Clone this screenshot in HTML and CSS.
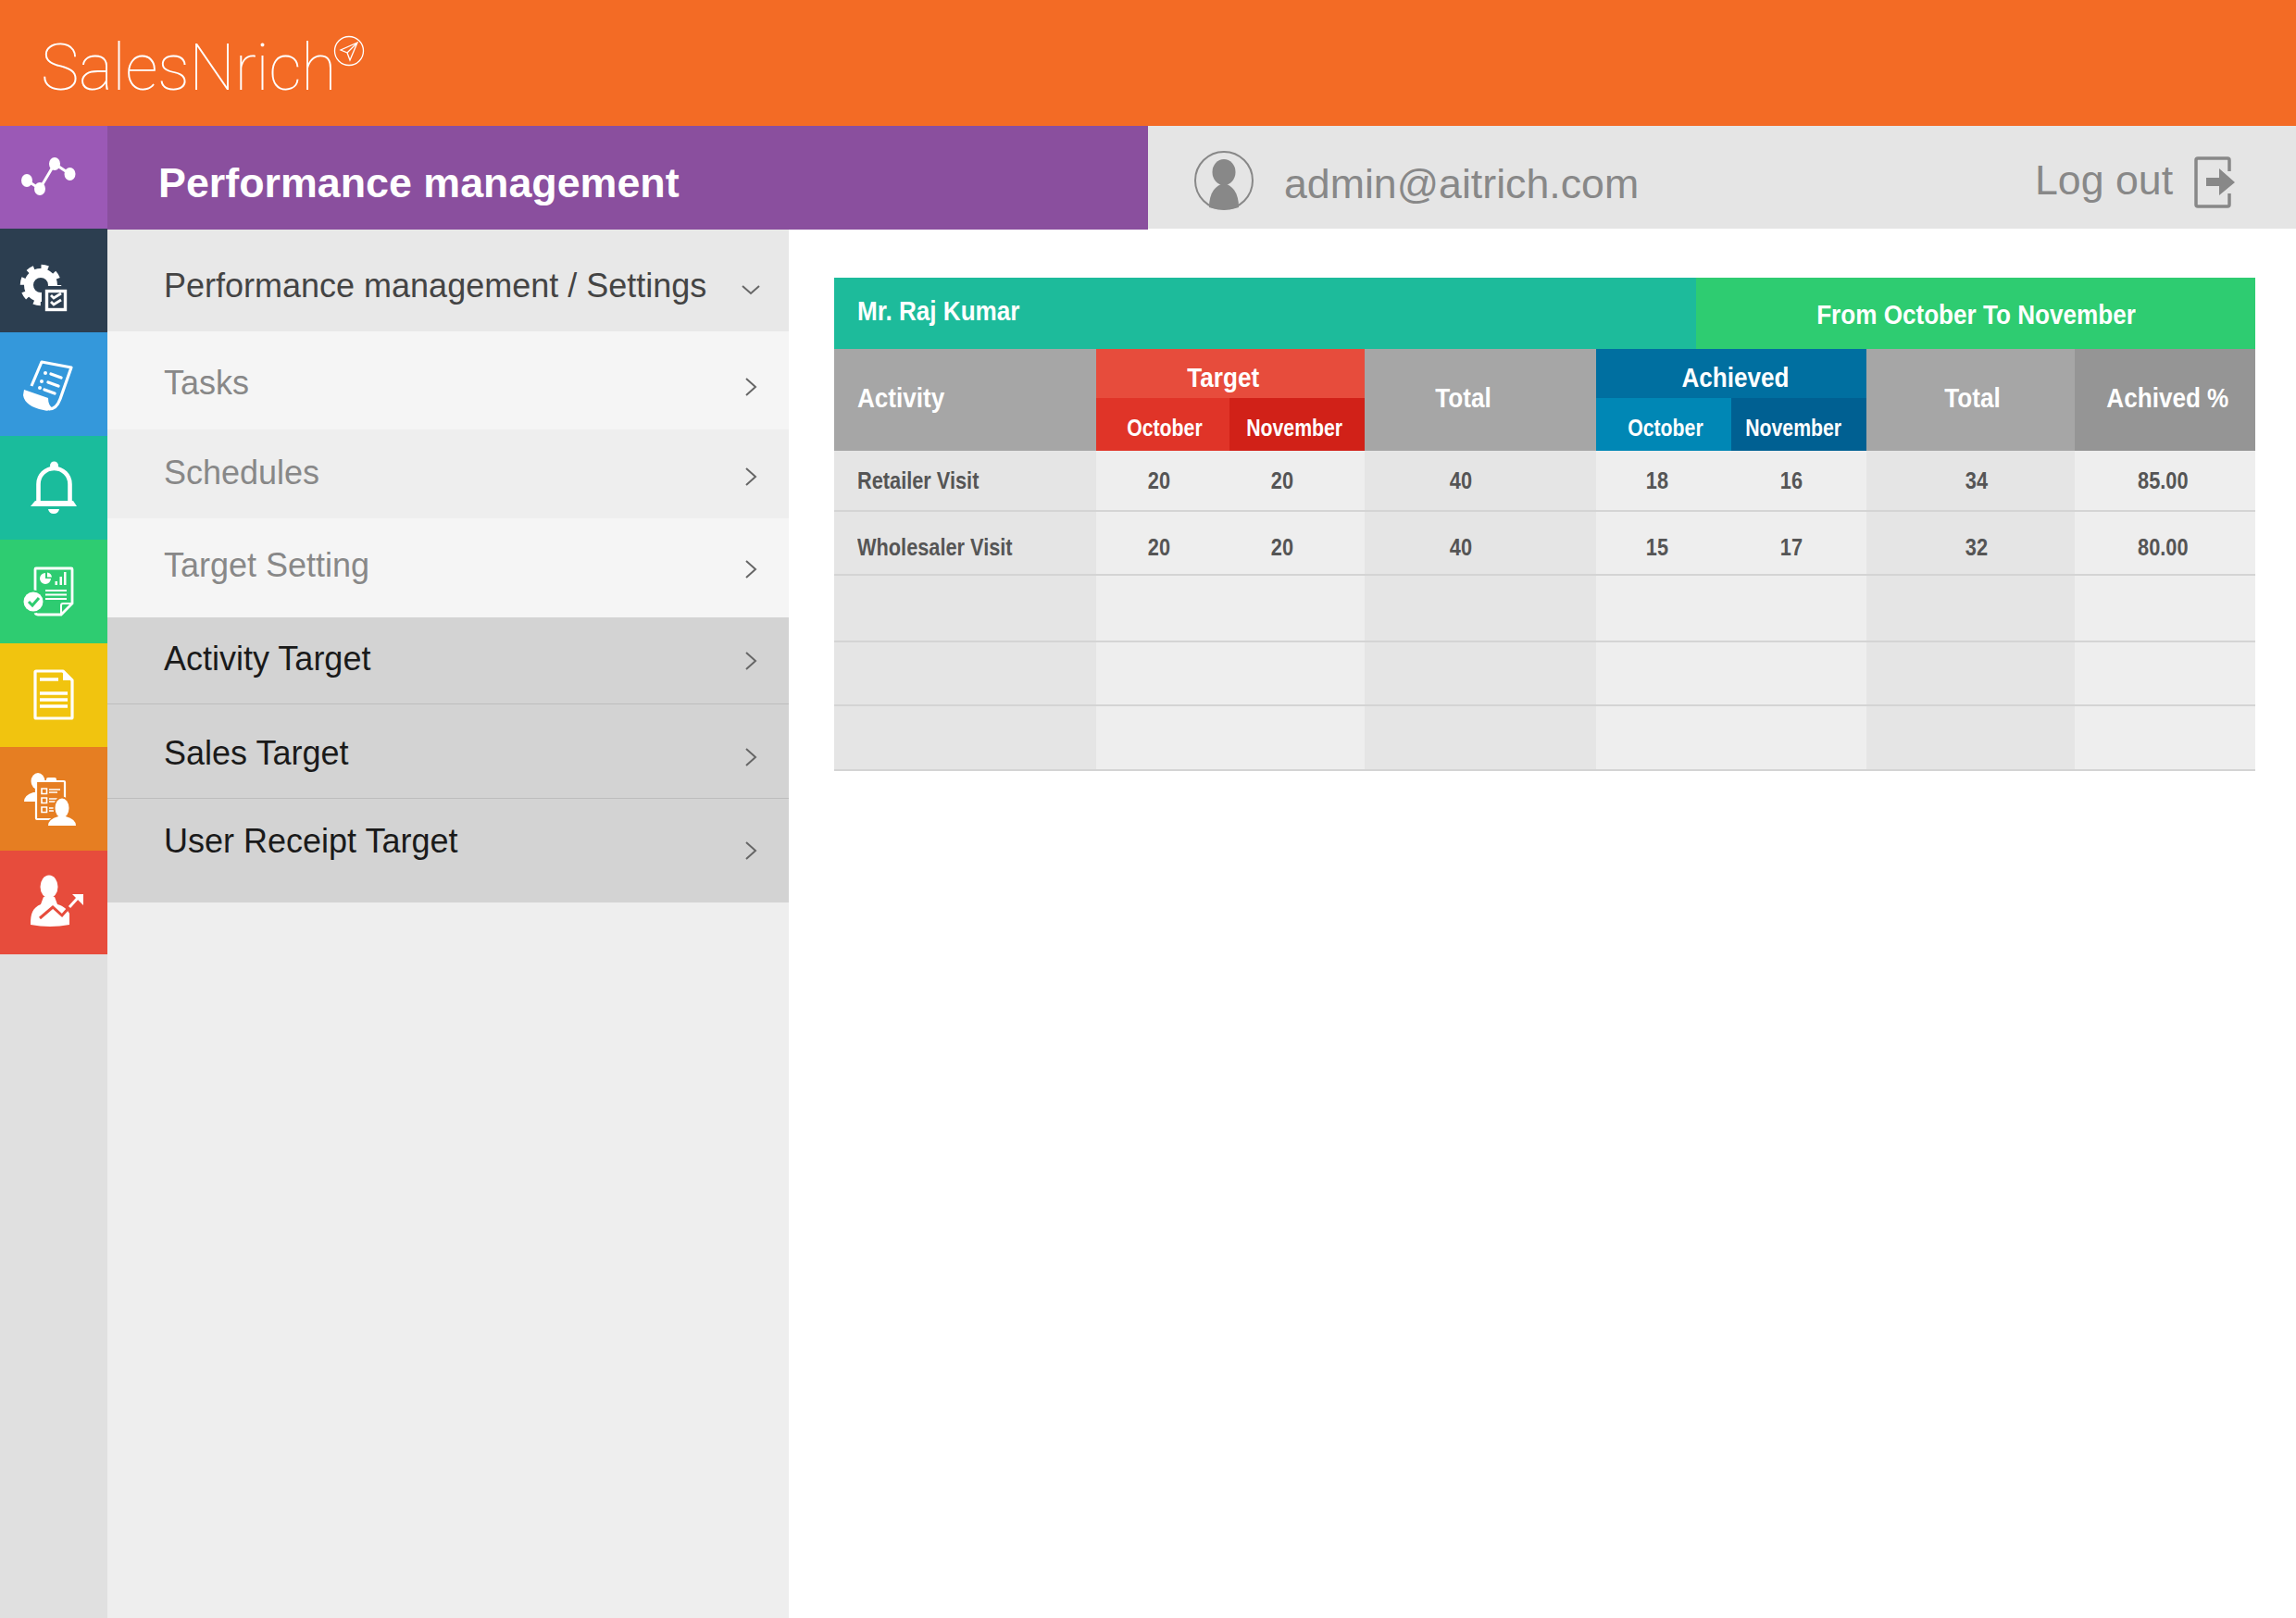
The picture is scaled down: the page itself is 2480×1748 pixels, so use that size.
FILE: index.html
```html
<!DOCTYPE html>
<html lang="en">
<head>
  <meta charset="UTF-8" />
  <title>SalesNrich - Performance management</title>
  <link rel="stylesheet" href="styles.css">
</head>
<body>

  <header class="topbar">
    <span class="logo">SalesNrich</span>
    <svg class="logo-badge" viewBox="0 0 36 36" fill="none" stroke="#fff" stroke-width="1.3">
      <circle cx="18" cy="18" r="15.5"/>
      <path d="M27 9 L9 17 L16 20 L19 28 Z M27 9 L16 20"/>
    </svg>
  </header>

  <div class="subbar">
    <div class="subbar-icon">
      <svg class="tile-icon" viewBox="0 0 116 111" fill="#fff" stroke="#fff">
        <path d="M29 59 L43 68 L59 41 L75.5 52" fill="none" stroke-width="3"/>
        <ellipse cx="29" cy="59" rx="6" ry="7" stroke="none"/>
        <ellipse cx="43" cy="68" rx="6" ry="7" stroke="none"/>
        <ellipse cx="59" cy="41" rx="6" ry="7" stroke="none"/>
        <ellipse cx="75.5" cy="52" rx="6" ry="7" stroke="none"/>
      </svg>
    </div>
    <h1 class="subbar-title">Performance management</h1>
    <div class="userbar">
      <svg class="user-icon" viewBox="0 0 66 66" fill="#888">
        <circle cx="33" cy="33" r="31" fill="none" stroke="#888" stroke-width="2"/>
        <ellipse cx="33" cy="24" rx="12.5" ry="14"/>
        <path d="M17 62 C17 46 24 38 33 36 C42 38 49 46 49 62 C40 65 26 65 17 62 Z"/>
      </svg>
      <span class="user-mail">admin@aitrich.com</span>
      <span class="logout">Log out</span>
      <svg class="logout-icon" viewBox="0 0 46 56" fill="#888">
        <path d="M38 16 V4 Q38 2 36 2 H4 Q2 2 2 4 V52 Q2 54 4 54 H36 Q38 54 38 52 V40" fill="none" stroke="#888" stroke-width="3.5"/>
        <path d="M13 23 H27 V13 L44 28 L27 42 V32 H13 Z"/>
      </svg>
    </div>
  </div>

  <div class="main">
    <nav class="rail">
      <div class="tile tile-dark">
        <svg class="tile-icon" viewBox="0 0 116 112" fill="#fff">
          <circle cx="44" cy="61" r="13" fill="none" stroke="#fff" stroke-width="10"/>
          <circle cx="44" cy="61" r="19.5" fill="none" stroke="#fff" stroke-width="5.500" stroke-dasharray="7.500 7.800"/>
          <rect x="45" y="62" width="31" height="31" fill="#2c3e50"/>
          <rect x="50.500" y="67.500" width="20" height="20" fill="none" stroke="#fff" stroke-width="3.400"/>
          <path d="M55 72 L58 75 L66 70 M55 79 L58 82 L66 77" fill="none" stroke="#fff" stroke-width="2.800"/>
        </svg>
      </div>
      <div class="tile tile-blue">
        <svg class="tile-icon" viewBox="0 0 116 112" fill="#fff">
          <path d="M34 58 L45 32 L77 38 L65 72 Q61 83 53 83" fill="none" stroke="#fff" stroke-width="3.200" stroke-linejoin="round"/>
          <path d="M26 62 L52 71 Q52 79 57 82 Q53 86 47 84 Q27 80 25 68 Z"/>
          <circle cx="49" cy="44" r="2"/>
          <circle cx="45" cy="53" r="2"/>
          <circle cx="43" cy="60" r="2"/>
          <path d="M55 45 L66 49 M52 54 L63 58 M48 62 L59 66" stroke="#fff" stroke-width="3.400" stroke-linecap="round"/>
        </svg>
      </div>
      <div class="tile tile-teal">
        <svg class="tile-icon" viewBox="0 0 116 112" fill="#fff">
          <circle cx="58.500" cy="32" r="4.500"/>
          <path d="M41.500 71 V52 A17 17 0 0 1 75.500 52 V71" fill="none" stroke="#fff" stroke-width="4.600"/>
          <path d="M38 70 H79 L83 76 H33 Z"/>
          <path d="M52 79 H64 Q63 84 58 84 Q53 84 52 79 Z"/>
        </svg>
      </div>
      <div class="tile tile-green">
        <svg class="tile-icon" viewBox="0 0 116 112" fill="#fff">
          <path d="M38 56 V32 Q38 31 39 31 H77 Q78 31 78 32 V69 L66 81 H41 Q38 81 38 78" fill="none" stroke="#fff" stroke-width="2.800"/>
          <path d="M78 69 H68 Q66 69 66 71 V81" fill="none" stroke="#fff" stroke-width="2"/>
          <path d="M49 36 A6 6 0 1 0 55 42 H49 Z"/>
          <path d="M51 35.500 A6 6 0 0 1 56 40.500 H51 Z"/>
          <path d="M59.500 49 V45 H62 V49 Z M64.500 49 V40 H67 V49 Z M69 49 V35 H71.500 V49 Z"/>
          <path d="M49 55 H72 M49 59.500 H72 M49 64 H72" stroke="#fff" stroke-width="1.800"/>
          <circle cx="36" cy="67" r="12.500" fill="#2ecc71"/>
          <circle cx="36" cy="67" r="10.500"/>
          <path d="M31 67 L35 71 L42 63" fill="none" stroke="#2ecc71" stroke-width="3"/>
        </svg>
      </div>
      <div class="tile tile-yellow">
        <svg class="tile-icon" viewBox="0 0 116 112" fill="#fff">
          <path d="M68 30 H39 Q38 30 38 31 V80 Q38 81 39 81 H77 Q78 81 78 80 V40 Z" fill="none" stroke="#fff" stroke-width="3.200" stroke-linejoin="round"/>
          <path d="M68 31 V40 H77 Z"/>
          <path d="M43 39 H63 M43 54 H73 M43 61 H73 M43 68 H73" stroke="#fff" stroke-width="3.600"/>
        </svg>
      </div>
      <div class="tile tile-orange">
        <svg class="tile-icon" viewBox="0 0 116 112" fill="#fff">
          <ellipse cx="41" cy="37" rx="7.500" ry="9"/>
          <path d="M26 59 Q26 52 36 49 L39 49 V59 Z"/>
          <rect x="39" y="37" width="31" height="41" fill="#e67e22" stroke="#fff" stroke-width="2.200" rx="1"/>
          <rect x="50" y="33" width="11" height="5" rx="2"/>
          <path d="M45 45 h5.500 v5.500 h-5.500 Z M45 55 h5.500 v5.500 h-5.500 Z M45 65 h5.500 v5.500 h-5.500 Z" fill="none" stroke="#fff" stroke-width="1.600"/>
          <path d="M53 46 H65 M53 49 H62 M53 56 H62 M53 59 H60 M53 66 H60 M53 69 H58" stroke="#fff" stroke-width="1.400"/>
          <ellipse cx="67" cy="66" rx="9.500" ry="12.500" fill="#e67e22"/>
          <path d="M50 87 Q50 77 62 74 L72 74 Q84 77 84 87 Z" fill="#e67e22"/>
          <ellipse cx="67" cy="66" rx="7.500" ry="10.500"/>
          <path d="M52 85 Q52 78 63 75 L71 75 Q82 78 82 85 Z"/>
        </svg>
      </div>
      <div class="tile tile-red">
        <svg class="tile-icon" viewBox="0 0 116 112" fill="#fff">
          <ellipse cx="53" cy="39" rx="9.500" ry="12.500"/>
          <path d="M33 80 C33 68 35 62 44 58 L47 50 H59 L62 58 C69 60 73 64 75 68 V80 Q54 84 33 80 Z"/>
          <path d="M43 73 L57 61 L67 70 L75 61" fill="none" stroke="#e74c3c" stroke-width="3"/>
          <path d="M75 61 L84 51" fill="none" stroke="#fff" stroke-width="3"/>
          <path d="M78 47 H90 V59 Z"/>
        </svg>
      </div>
    </nav>

    <aside class="menu">
      <a class="menu-item item-head"><span class="menu-label">Performance management / Settings</span>
        <svg class="chev" viewBox="0 0 20 20"><path d="M1 6 L10 14 L19 6"/></svg></a>
      <a class="menu-item item-tasks"><span class="menu-label">Tasks</span>
        <svg class="chev" viewBox="0 0 20 20"><path d="M5 1 L15 10 L5 19"/></svg></a>
      <a class="menu-item item-schedules"><span class="menu-label">Schedules</span>
        <svg class="chev" viewBox="0 0 20 20"><path d="M5 1 L15 10 L5 19"/></svg></a>
      <a class="menu-item item-setting"><span class="menu-label">Target Setting</span>
        <svg class="chev" viewBox="0 0 20 20"><path d="M5 1 L15 10 L5 19"/></svg></a>
      <a class="menu-item item-activity"><span class="menu-label">Activity Target</span>
        <svg class="chev" viewBox="0 0 20 20"><path d="M5 1 L15 10 L5 19"/></svg></a>
      <a class="menu-item item-sales"><span class="menu-label">Sales Target</span>
        <svg class="chev" viewBox="0 0 20 20"><path d="M5 1 L15 10 L5 19"/></svg></a>
      <a class="menu-item item-receipt"><span class="menu-label">User Receipt Target</span>
        <svg class="chev" viewBox="0 0 20 20"><path d="M5 1 L15 10 L5 19"/></svg></a>
    </aside>

    <section class="content">
      <div class="report-title">
        <div class="report-name"><span class="nar nar-left">Mr. Raj Kumar</span></div>
        <div class="report-range"><span class="nar">From October To November</span></div>
      </div>
      <table class="report">
        <colgroup>
          <col class="c-activity"><col class="c-month-a"><col class="c-month-b"><col class="c-total">
          <col class="c-month-b"><col class="c-month-b"><col class="c-total2"><col class="c-pct">
        </colgroup>
        <thead>
          <tr class="head-top">
            <th rowspan="2" class="h-grey h-activity"><span class="nar nar-left">Activity</span></th>
            <th colspan="2" class="h-target"><span class="nar">Target</span></th>
            <th rowspan="2" class="h-grey h-total1"><span class="nar">Total</span></th>
            <th colspan="2" class="h-achieved"><span class="nar">Achieved</span></th>
            <th rowspan="2" class="h-grey h-total2"><span class="nar">Total</span></th>
            <th rowspan="2" class="h-pct"><span class="nar">Achived %</span></th>
          </tr>
          <tr class="head-sub">
            <th class="h-t-oct"><span class="nar">October</span></th>
            <th class="h-t-nov"><span class="nar">November</span></th>
            <th class="h-a-oct"><span class="nar">October</span></th>
            <th class="h-a-nov"><span class="nar">November</span></th>
          </tr>
        </thead>
        <tbody>
          <tr class="row-1">
            <td class="b-name"><span class="nar nar-left">Retailer Visit</span></td>
            <td class="b-t1"><span class="nar">20</span></td><td class="b-t2"><span class="nar">20</span></td>
            <td class="b-sum1"><span class="nar">40</span></td>
            <td class="b-a1"><span class="nar">18</span></td><td class="b-a2"><span class="nar">16</span></td>
            <td class="b-sum2"><span class="nar">34</span></td><td class="b-pct"><span class="nar">85.00</span></td>
          </tr>
          <tr class="row-2">
            <td class="b-name"><span class="nar nar-left">Wholesaler Visit</span></td>
            <td class="b-t1"><span class="nar">20</span></td><td class="b-t2"><span class="nar">20</span></td>
            <td class="b-sum1"><span class="nar">40</span></td>
            <td class="b-a1"><span class="nar">15</span></td><td class="b-a2"><span class="nar">17</span></td>
            <td class="b-sum2"><span class="nar">32</span></td><td class="b-pct"><span class="nar">80.00</span></td>
          </tr>
          <tr class="row-3"><td class="b-name"></td><td></td><td></td><td class="b-sum1"></td><td></td><td></td><td class="b-sum2"></td><td></td></tr>
          <tr class="row-4"><td class="b-name"></td><td></td><td></td><td class="b-sum1"></td><td></td><td></td><td class="b-sum2"></td><td></td></tr>
          <tr class="row-5"><td class="b-name"></td><td></td><td></td><td class="b-sum1"></td><td></td><td></td><td class="b-sum2"></td><td></td></tr>
        </tbody>
      </table>
    </section>
  </div>

</body>
</html>
```

FILE: styles.css
```css
* {
  box-sizing: border-box;
}
html, body {
  height: 100%;
}
body {
  margin: 0;
  display: flex;
  flex-direction: column;
  font-family: "Liberation Sans", Arial, sans-serif;
  background: #fff;
  overflow: hidden;
}

/* top bar */
.topbar {
  height: 136px;
  flex: none;
  background: #f36b25;
  display: flex;
  align-items: flex-start;
  padding-left: 44px;
  color: #fff;
}
.logo {
  font-family: Roboto, sans-serif;
  font-weight: 100;
  font-size: 70px;
  line-height: 70px;
  margin-top: 38px;
  letter-spacing: -.5px;
}
.logo-badge {
  width: 36px;
  height: 36px;
  margin: 37px 0 0 -4px;
}

/* purple bar */
.subbar {
  height: 112px;
  flex: none;
  display: flex;
}
.subbar-icon {
  width: 116px;
  height: 111px;
  background: #9b59b6;
}
.subbar-title {
  width: 1124px;
  margin: 0;
  padding: 5px 0 0 55px;
  background: #8a4f9e;
  color: #fff;
  font-size: 44.8px;
  font-weight: bold;
  line-height: 112px;
}
.userbar {
  flex: 1;
  height: 111px;
  background: #e5e5e5;
  color: #888;
  font-size: 44.7px;
  display: flex;
  align-items: center;
  padding-left: 49px;
}
.user-icon {
  width: 66px;
  height: 66px;
  margin-top: 7px;
}
.user-mail {
  margin-left: 32px;
  width: 811px;
  margin-top: 15px;
}
.logout {
  margin-top: 6px;
}
.logout-icon {
  width: 46px;
  height: 56px;
  margin: 11px 0 0 23px;
}

/* main */
.main {
  flex: 1;
  display: flex;
  min-height: 0;
}
.rail {
  width: 116px;
  margin-top: -1px;
  background: #e0e0e0;
}
.tile {
  height: 112px;
}
.tile-icon {
  display: block;
  width: 116px;
  height: 100%;
}
.tile-dark { background: #2c3e50; }
.tile-blue { background: #3498db; }
.tile-teal { background: #1abc9c; }
.tile-green { background: #2ecc71; }
.tile-yellow { background: #f1c40f; }
.tile-orange { background: #e67e22; }
.tile-red { background: #e74c3c; }

/* settings menu */
.menu {
  width: 736px;
  background: #eee;
}
.menu-item {
  display: flex;
  align-items: center;
  justify-content: space-between;
  padding: 0 31px 0 61px;
  font-size: 36px;
}
.chev {
  width: 20px;
  height: 20px;
  fill: none;
  stroke: #666;
  stroke-width: 2;
}
.item-head {
  height: 110px;
  background: #e8e8e8;
  color: #444;
}
.item-head .menu-label { margin-top: 12px; }
.item-head .chev { margin-top: 20px; }
.item-tasks {
  height: 106px;
  background: #f5f5f5;
  color: #888;
}
.item-tasks .menu-label { margin-top: 5px; }
.item-tasks .chev { margin-top: 14px; }
.item-schedules {
  height: 96px;
  background: #eee;
  color: #888;
}
.item-schedules .menu-label { margin-bottom: 3px; }
.item-schedules .chev { margin-top: 6px; }
.item-setting {
  height: 107px;
  background: #f5f5f5;
  color: #888;
}
.item-setting .menu-label { margin-bottom: 6px; }
.item-setting .chev { margin-top: 2px; }
.item-activity, .item-sales, .item-receipt {
  background: #d3d3d3;
  color: #1a1a1a;
}
.item-activity {
  height: 94px;
  border-bottom: 1px solid #bdbdbd;
}
.item-activity .menu-label { margin-bottom: 4px; }
.item-sales {
  height: 102px;
  border-bottom: 1px solid #bdbdbd;
}
.item-sales .menu-label { margin-top: 4px; }
.item-sales .chev { margin-top: 12px; }
.item-receipt {
  height: 112px;
}
.item-receipt .menu-label { margin-bottom: 20px; }

/* report */
.content {
  flex: 1;
  padding: 52px 44px 0 49px;
}
.nar {
  display: inline-block;
  transform: scaleX(.9);
  white-space: nowrap;
}
.nar-left {
  transform-origin: left center;
}
.head-sub .nar {
  transform: scaleX(.85);
}
.report td .nar {
  transform: scaleX(.87);
}
.report-title {
  display: flex;
  height: 77px;
  color: #fff;
  font-size: 29px;
  font-weight: bold;
}
.report-name {
  width: 931px;
  background: #1dbb9b;
  line-height: 72px;
  padding-left: 25px;
}
.report-range {
  flex: 1;
  background: #2ecc71;
  line-height: 80px;
  text-align: center;
}
.report {
  width: 1535px;
  table-layout: fixed;
  border-collapse: collapse;
  border-spacing: 0;
}
.c-activity { width: 283px; }
.c-month-a { width: 144px; }
.c-month-b { width: 146px; }
.c-total { width: 250px; }
.c-total2 { width: 225px; }
.c-pct { width: 195px; }
.report th {
  padding: 0;
  color: #fff;
  font-size: 29px;
  font-weight: bold;
}
.head-top { height: 53px; }
.head-sub { height: 57px; }
.head-sub th { font-size: 25px; padding-top: 8px; }
.h-grey { background: #a6a6a6; }
.report th.h-activity { text-align: left; padding: 0 0 4px 25px; }
.report th.h-total1 { padding: 0 36px 4px 0; }
.report th.h-total2 { padding: 0 0 4px 4px; }
.h-target { background: #e74c3c; padding-right: 16px !important; padding-top: 9px !important; }
.h-achieved { background: #006fa0; padding-left: 8px !important; padding-top: 9px !important; }
.h-pct { background: #959595; padding: 0 0 4px 6px !important; }
.h-t-oct { background: #e03428; padding-left: 3px !important; }
.h-t-nov { background: #d12118; padding-right: 6px !important; }
.h-a-oct { background: #0087b5; padding-left: 4px !important; }
.h-a-nov { background: #006092; padding-right: 11px !important; }
.report td {
  padding: 0;
  background: #eee;
  border-bottom: 2px solid #d4d4d4;
  color: #555;
  font-size: 25px;
  font-weight: bold;
  text-align: center;
}
.report td.b-name, .report td.b-sum1, .report td.b-sum2 {
  background: #e5e5e5;
}
.report td.b-name { text-align: left; padding-left: 25px; }
.report td.b-t1 { padding-right: 8px; }
.report td.b-t2 { padding-right: 32px; }
.report td.b-sum1 { padding-right: 42px; }
.report td.b-a1 { padding-right: 14px; }
.report td.b-a2 { padding-right: 16px; }
.report td.b-sum2 { padding-left: 12px; }
.report td.b-pct { padding-right: 4px; }
.row-1 { height: 65px; }
.row-2 { height: 69px; }
.row-2 td { padding-top: 10px !important; }
.row-3 { height: 72px; }
.row-4 { height: 69px; }
.row-5 { height: 70px; }
```
